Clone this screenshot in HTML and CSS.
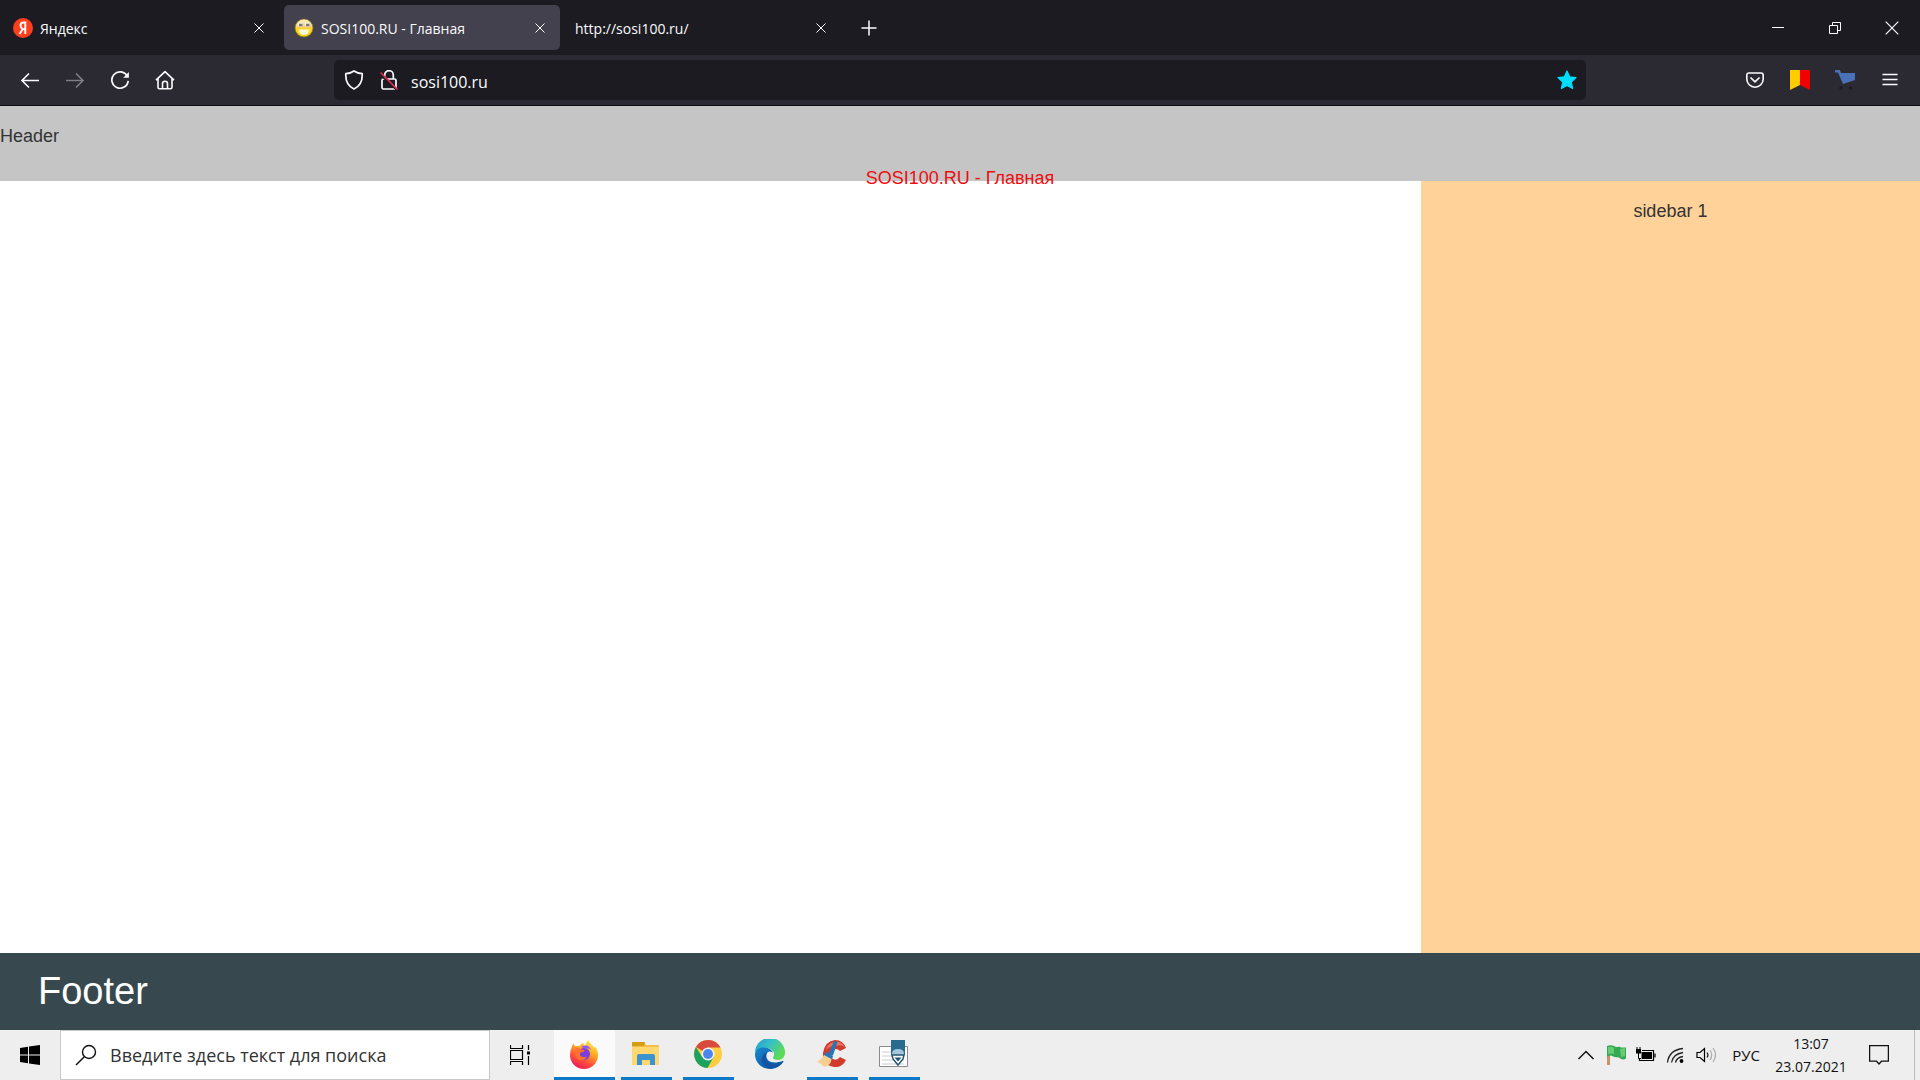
FILE: index.html
```html
<!DOCTYPE html>
<html lang="ru">
<head>
<meta charset="utf-8">
<title>SOSI100.RU - Главная</title>
<link rel="stylesheet" href="styles.css">
</head>
<body>
<div class="desktop">
  <div class="browser">
    <div class="tabbar">
      <div class="tabs">
        <div class="tab">
          <svg class="icon20" viewBox="0 0 20 20"><circle cx="10" cy="10" r="10" fill="#fc3f1d" stroke="none"/><path d="M12.300 16V4.500h-1.600C8.600 4.500 7.500 5.700 7.500 7.500c0 1.600.8 2.500 2.200 3.500L6.600 16M12.300 11.300h-2.300" fill="none" stroke="#fff" stroke-width="1.900"/></svg>
          <span class="tab-title">Яндекс</span>
          <button class="tab-close" aria-label="Закрыть вкладку"><svg class="icon10" viewBox="0 0 10 10"><path d="M.5.5l9 9M9.500.5l-9 9"/></svg></button>
        </div>
        <div class="tab tab-active">
          <svg class="icon20" viewBox="0 0 20 20"><defs><linearGradient id="smile" x1="0" y1="0" x2="0" y2="1"><stop offset="0" stop-color="#fff3d0"/><stop offset=".45" stop-color="#f5cf6a"/><stop offset=".6" stop-color="#ffd900"/><stop offset="1" stop-color="#f2d000"/></linearGradient></defs><circle cx="10" cy="10" r="9" fill="url(#smile)" stroke="#8d7524" stroke-width=".8"/><path d="M4 6.500h5M11 6.500h5" stroke="#f3efe6" stroke-width="3.500"/><path d="M5 7h3.500M12 7h3.500" stroke="#7d7b78" stroke-width="2.500"/><path d="M4.500 11.500h11q-1 5.500-5.500 5.500t-5.500-5.500z" fill="#fffbe0" stroke="none"/></svg>
          <span class="tab-title">SOSI100.RU - Главная</span>
          <button class="tab-close" aria-label="Закрыть вкладку"><svg class="icon10" viewBox="0 0 10 10"><path d="M.5.5l9 9M9.500.5l-9 9"/></svg></button>
        </div>
        <div class="tab">
          <span class="tab-title">http://sosi100.ru/</span>
          <button class="tab-close" aria-label="Закрыть вкладку"><svg class="icon10" viewBox="0 0 10 10"><path d="M.5.5l9 9M9.500.5l-9 9"/></svg></button>
        </div>
        <button class="tab-new" aria-label="Новая вкладка"><svg class="icon16" viewBox="0 0 16 16"><path d="M8 .5v15M.5 8h15" stroke-width="1.500"/></svg></button>
      </div>
      <div class="window-controls">
        <button class="window-button" aria-label="Свернуть"><svg class="icon14" viewBox="0 0 14 14"><path d="M1 6.500h12"/></svg></button>
        <button class="window-button" aria-label="Восстановить"><svg class="icon14" viewBox="0 0 14 14"><path d="M1.500 4.500h8v8h-8zM4.500 4V1.500h8v8H10"/></svg></button>
        <button class="window-button" aria-label="Закрыть"><svg class="icon14" viewBox="0 0 14 14"><path d="M.7.700l12.600 12.600M13.300.7L.7 13.300" stroke-width="1.200"/></svg></button>
      </div>
    </div>

    <div class="toolbar">
      <div class="nav-buttons">
        <button class="tool-button" aria-label="Назад"><svg class="icon20" viewBox="0 0 20 20"><path d="M19 10.500H2M9 3.500l-7 7 7 7" stroke-width="1.600"/></svg></button>
        <button class="tool-button" aria-label="Вперёд" disabled><svg class="icon20" viewBox="0 0 20 20"><path d="M1 10.500h17M11 3.500l7 7-7 7" stroke-width="1.600"/></svg></button>
        <button class="tool-button" aria-label="Обновить"><svg class="icon20" viewBox="0 0 20 20"><path d="M17.200 6A8.200 8.200 0 1 0 18.200 10.800" stroke-width="1.700"/><path d="M18.900 2v5.700h-5.700z" fill="#fbfbfe" stroke="none"/></svg></button>
        <button class="tool-button" aria-label="Домой"><svg class="icon20" viewBox="0 0 20 20"><path d="M1 10.200L10 1.600l9 8.600M3 8.700v8.600q0 1.500 1.500 1.500h11q1.500 0 1.500-1.500V8.700M7.500 18.600v-4.800a2.500 2.500 0 0 1 5 0v4.800" stroke-width="1.600" stroke-linejoin="round"/></svg></button>
      </div>
      <div class="address">
        <svg class="icon20" viewBox="0 0 20 20"><path d="M10 1Q6.500 3.500 1.800 3.700C1.400 10.600 3.300 15.800 10 19 16.700 15.800 18.600 10.600 18.200 3.700 13.500 3.500 10 1 10 1z" stroke-width="1.700" stroke-linejoin="round"/></svg>
        <svg class="icon20" viewBox="0 0 20 20"><path d="M5.700 8.500V5a4.300 4.300 0 0 1 8.600 0v3.500M4.500 9h11q1.500 0 1.500 1.500v7q0 1.500-1.500 1.500h-11Q3 19 3 17.500v-7Q3 9 4.500 9z" stroke-width="1.700"/><path d="M0 3.500L18.500 20.500" stroke="#1c1b22" stroke-width="2"/><path d="M1.500 2.500l17 17" stroke="#e22850" stroke-width="1.700"/></svg>
        <input class="address-input" type="text" value="sosi100.ru" aria-label="Адрес">
        <button class="star" aria-label="Закладка"><svg class="icon20" viewBox="0 0 20 20"><path d="M10 1l2.600 5.800 6.400.8-4.700 4.400 1.300 6.500L10 15.500l-5.600 3 1.300-6.500L1 7.600l6.400-.8z" fill="#00ddff" stroke="#00ddff" stroke-width="1.200" stroke-linejoin="round"/></svg></button>
      </div>
      <div class="extensions">
        <button class="tool-button" aria-label="Pocket"><svg class="icon20" viewBox="0 0 20 20"><path d="M4 3h12q2.200 0 2.200 2.200V9a8.200 8.200 0 0 1-16.400 0V5.200Q1.800 3 4 3z" stroke-width="1.600"/><path d="M5.500 7.500L10 11.800l4.500-4.300" stroke-width="1.700"/></svg></button>
        <button class="tool-button" aria-label="Закладки"><svg class="icon20" viewBox="0 0 20 20"><path d="M0 0h10v15L0 20z" fill="#fc0" stroke="none"/><path d="M10 0h10v20l-10-5z" fill="#f00000" stroke="none"/></svg></button>
        <button class="tool-button" aria-label="Покупки"><svg class="icon20" viewBox="0 0 20 20"><path d="M0 0h5l1 3h14v7L8 14 3 2.500H0z" fill="#4971b7" stroke="none"/><circle cx="6" cy="18" r="1.700" fill="#1c1b22" stroke="none"/><circle cx="15.500" cy="18" r="1.700" fill="#1c1b22" stroke="none"/></svg></button>
        <button class="tool-button" aria-label="Меню"><svg class="icon20" viewBox="0 0 20 20"><path d="M2.500 4.500h15M2.500 9.500h15M2.500 14.500h15" stroke-width="1.500"/></svg></button>
      </div>
    </div>

    <div class="site">
      <header class="site-header">
        <p class="header-label">Header</p>
        <p class="site-title">SOSI100.RU - Главная</p>
      </header>
      <div class="site-body">
        <main class="site-main"></main>
        <aside class="sidebar">sidebar 1</aside>
      </div>
      <footer class="site-footer">Footer</footer>
    </div>
  </div>

  <div class="taskbar">
    <button class="start" aria-label="Пуск"><svg class="icon20" viewBox="0 0 20 20"><path d="M0 3l8-1.200v7.700H0zM9 1.600L20 0v9.500H9zM0 10.500h8v7.700L0 17zM9 10.500h11V20L9 18.400z" fill="#000"/></svg></button>
    <label class="search">
      <svg class="icon22" viewBox="0 0 22 22"><circle cx="14" cy="8" r="6.500" fill="none" stroke="#111" stroke-width="1.400"/><path d="M9.300 12.700L1 21" stroke="#111" stroke-width="1.500"/></svg>
      <input class="search-input" type="text" placeholder="Введите здесь текст для поиска" aria-label="Поиск">
    </label>
    <button class="task-view" aria-label="Представление задач"><svg class="icon20" viewBox="0 0 20 20"><path d="M.5 0v3.500h12V0M.5 5.500h12v9H.5zM.5 20v-3.500h12V20M18.500 0v5M18.500 11v9" fill="none" stroke="#000" stroke-width="1.200"/><path d="M17 6.500h3v3h-3z"/></svg></button>
    <div class="apps">
      <button class="app app-wide" aria-label="Firefox"><svg class="icon30" viewBox="0 0 30 30"><defs><linearGradient id="fx" x1=".8" y1="0" x2=".3" y2="1"><stop offset="0" stop-color="#fff44f"/><stop offset=".4" stop-color="#ffa51f"/><stop offset=".7" stop-color="#ff4f3a"/><stop offset="1" stop-color="#e8175d"/></linearGradient></defs><path d="M2.500 9Q3 6 4.500 4.500q.5 2 2 3 2-1.200 4-.5Q12 4.500 14.500 4q0 2 1.500 3Q17 3 19.500 1q.5 3 4 5.500Q25 8 25.500 9l.5-1.500Q29 11 29 16A14 14 0 0 1 1 16Q1 12 2.500 9z" fill="url(#fx)"/><circle cx="15" cy="15" r="6" fill="#7a3fd8"/><path d="M6 10q3-2 6 .5l4 .5q-1 2-4 2.500-2 1-1 3 3 3 7 1-3 5-8 3.500Q5 18.500 6 10z" fill="#ff7130"/><path d="M12 8q7-4 10 3-2-2-4-1.500-3-.5-6-1.500z" fill="#9059ff"/></svg></button>
      <button class="app" aria-label="Проводник"><svg class="icon30" viewBox="0 0 30 30"><path d="M1 4q0-1 1-1h11l2 3h12q1 0 1 1v18q0 1-1 1H2q-1 0-1-1z" fill="#f2c04a"/><path d="M1 4q0-1 1-1h11q1 0 1 1l-1 3H1z" fill="#d69d12"/><path d="M1 8h27v17q0 1-1 1H2q-1 0-1-1z" fill="#ffd970"/><path d="M6 26V17q0-2 2-2h14q2 0 2 2v9h-5v-5h-8v5z" fill="#3b94cf"/></svg></button>
      <button class="app" aria-label="Chrome"><svg class="icon30" viewBox="0 0 30 30"><circle cx="15" cy="15" r="14" fill="#ffcd40"/><path d="M15 15L2.900 8A14 14 0 0 1 27.500 8.500H15z" fill="#d84a3d"/><path d="M2.900 8A14 14 0 0 0 14.500 29L20.600 18.200 15 15 9.400 18.200z" fill="#1ba160"/><circle cx="15" cy="15" r="6.500" fill="#f5f5f5"/><circle cx="15" cy="15" r="5" fill="#4a86ee"/></svg></button>
      <button class="app app-idle" aria-label="Edge"><svg class="icon30" viewBox="0 0 30 30"><defs><linearGradient id="edge-top" x1="0" y1="0" x2="1" y2=".5"><stop offset="0" stop-color="#249cc9"/><stop offset=".5" stop-color="#35bfc8"/><stop offset="1" stop-color="#5fdc55"/></linearGradient><linearGradient id="edge-low" x1="0" y1="0" x2="1" y2="1"><stop offset="0" stop-color="#1687d1"/><stop offset="1" stop-color="#0c4d94"/></linearGradient></defs><path d="M0 14A15 15 0 0 1 30 13.500c0 5-3.500 7.500-7 7.500-4 0-6-1.500-4.500-3.500C21 12 15 9 10 9 5 9 1 11 0 14z" fill="url(#edge-top)"/><path d="M0 15C.5 10 5 8 9 8.500q7 .5 9 5-5-3-6.500 2c-1 7 6 10 16 6.500q1-.5 1 .5C25 28 20 30 15 30 6 30 0 23 0 15z" fill="url(#edge-low)"/><path d="M12 13c-4 8 3 14 12 13-5 4-12 4-16-1-3-4-1-10 4-12z" fill="#1554a5"/></svg></button>
      <button class="app" aria-label="CCleaner"><svg class="icon30" viewBox="0 0 30 30"><path d="M29 9L23 12q-4-4-8 0-3 5 1 8 4 2 7-2l6 3q-4 8-12 7Q5 26 6 14 8 2 18 1q8 0 11 8z" fill="#d23b2b"/><path d="M28 8q-4-6-11-5-6 1-8 8 5-5 10-4 4-2 9 1z" fill="#ec7561"/><path d="M17.500 3l2 .5-4 12-3-1z" fill="#2476ba" stroke="#2476ba" stroke-width="1.500"/><path d="M9 13l7 4-1.500 4-8-4z" fill="#2476ba"/><path d="M7 16l7.500 4Q14 26 8 28q-1-2-3-1 0-3-3-3-1-2-2-1.500Q5 20 7 16z" fill="#f4cf90"/></svg></button>
      <button class="app" aria-label="Редактор"><svg class="icon30" viewBox="0 0 30 30"><path d="M.5 7.500h28v20H.5z" fill="#fff" stroke="#8b8b8b"/><path d="M3 13h22M3 17h22M3 21h22M3 25h22" stroke="#ccc"/><path d="M12 1h14v15H12z" fill="#296b8d"/><path d="M13 15q0-5 6-5t6 5v3H13z" fill="#a5c7dc"/><path d="M13 16h12l-1 4-5 6-5-6z" fill="#fff" stroke="#235570" stroke-width="1.500"/><path d="M15.500 18.500h7L19 22.500z" fill="#235570"/></svg></button>
    </div>
    <div class="tray">
      <button class="tray-button" aria-label="Скрытые значки"><svg class="icon20" viewBox="0 0 20 20"><path d="M2.500 14L10 6.500l7.500 7.500" fill="none" stroke="#111" stroke-width="1.500"/></svg></button>
      <button class="tray-button" aria-label="Флаг"><svg class="icon20" viewBox="0 0 20 20"><path d="M1 1h3v19H1z" fill="#c99267"/><path d="M1 1q4-1.500 8 .500 2 1 4 0l2 1h5v11q-2 1.500-5 .500l-2-1.500q-5 0-8-2-2 0-4 1z" fill="#35a852"/><path d="M2 2q4-1 6 1v6q-3-1-6 0zM14 4l5-1v8l-4 1z" fill="#65cc74"/></svg></button>
      <button class="tray-button" aria-label="Батарея"><svg class="icon20" viewBox="0 0 20 20"><path d="M6 5.500h11.500v10h-14V13M19 8.500v4" fill="none" stroke="#000" stroke-width="1.200"/><path d="M5.500 7h10.500v7H5.500zM0 4h5v4.500H0z"/><path d="M1 2v3M4 2v3M2.500 8v5.500H5" fill="none" stroke="#000"/></svg></button>
      <button class="tray-button" aria-label="Сеть"><svg class="icon20" viewBox="0 0 20 20"><path d="M1.500 17.500Q3 5 17 3.500M5.500 17.500Q7 9 17 7.500M9.500 17.500q1-5 7.500-6" fill="none" stroke="#222" stroke-width="1.300"/><circle cx="15.500" cy="16" r="1.900"/></svg></button>
      <button class="tray-button" aria-label="Звук"><svg class="icon20" viewBox="0 0 20 20"><path d="M1 7.500h3L8.500 3.500v13L4 12.500H1z" fill="none" stroke="#000" stroke-width="1.200"/><path d="M11 7.500q2 2.500 0 5" fill="none" stroke="#222" stroke-width="1.200"/><path d="M14 5q3.500 5 0 10M17 3q5 7 0 14" fill="none" stroke="#aaa" stroke-width="1.200"/></svg></button>
      <button class="language">РУС</button>
      <button class="clock"><span>13:07</span><span>23.07.2021</span></button>
      <button class="notifications" aria-label="Уведомления"><svg class="icon20" viewBox="0 0 20 20"><path d="M.6.700h18.800v15.500H12.500L10 19l-2.500-2.800H.6z" fill="none" stroke="#111" stroke-width="1.300"/></svg></button>
      <button class="show-desktop" aria-label="Показать рабочий стол"></button>
    </div>
  </div>
</div>
</body>
</html>
```
FILE: styles.css
```css
* {
  box-sizing: border-box;
}

body {
  margin: 0;
  font-family: "Open Sans", "Noto Sans", sans-serif;
}

button {
  display: flex;
  align-items: center;
  justify-content: center;
  margin: 0;
  padding: 0;
  border: 0;
  background: none;
  color: inherit;
  font: inherit;
}

input {
  min-width: 0;
  padding: 0;
  border: 0;
  outline: 0;
  background: none;
  font: inherit;
}

svg {
  display: block;
  flex: none;
}

.icon10 { width: 10px; height: 10px; }
.icon14 { width: 14px; height: 14px; }
.icon16 { width: 16px; height: 16px; }
.icon20 { width: 20px; height: 20px; }
.icon22 { width: 22px; height: 22px; }
.icon30 { width: 30px; height: 30px; }

.desktop,
.browser,
.site {
  display: flex;
  flex-direction: column;
}

.desktop {
  min-height: 100vh;
}

.browser,
.site {
  flex: 1;
}

/* Tab strip */
.tabbar {
  display: flex;
  justify-content: space-between;
  height: 55px;
  padding-left: 3px;
  background: #1c1b22;
  color: #fbfbfe;
}

.tabbar svg,
.toolbar svg {
  fill: none;
  stroke: #fbfbfe;
}

.tabs {
  display: flex;
  align-items: center;
  gap: 5px;
}

.tab {
  display: flex;
  align-items: center;
  gap: 7px;
  width: 276px;
  height: 45px;
  padding: 0 10px;
  border-radius: 5px;
  font-size: 14px;
}

.tab-active {
  background: #42414d;
}

.tab-title {
  flex: 1;
  padding-top: 2px;
  white-space: nowrap;
}

.tab-close {
  width: 20px;
  height: 20px;
}

.tab-new {
  width: 45px;
  height: 45px;
}

.window-controls {
  display: flex;
}

.window-button {
  width: 57px;
}

/* Navigation toolbar */
.toolbar {
  display: flex;
  align-items: center;
  height: 51px;
  padding: 0 8px 0 7px;
  border-bottom: 1px solid #0c0c0d;
  background: #2b2a33;
}

.nav-buttons,
.extensions {
  display: flex;
}

.tool-button {
  width: 45px;
  height: 40px;
}

.tool-button:disabled {
  opacity: 0.4;
}

.address {
  display: flex;
  flex: 1;
  align-items: center;
  gap: 15px;
  height: 40px;
  margin: 0 146px 0 147px;
  padding: 0 9px 0 10px;
  border-radius: 5px;
  background: #1c1b22;
}

.address-input {
  flex: 1;
  margin-left: -3px;
  padding-top: 3px;
  color: #fbfbfe;
  font-size: 16px;
}

/* Web page */
.site {
  background: #fff;
  color: #333;
  font-family: "Liberation Sans", Arial, sans-serif;
  font-size: 18px;
  line-height: 24px;
}

.site-header {
  height: 75px;
  padding-top: 18px;
  background: #c5c5c5;
}

.header-label,
.site-title {
  margin: 0;
}

.site-title {
  padding-top: 18px;
  color: #ee0d10;
  text-align: center;
}

.site-body {
  display: flex;
  flex: 1;
}

.site-main {
  flex: 1;
}

.sidebar {
  width: 26%;
  padding-top: 18px;
  background: #ffd29a;
  text-align: center;
}

.site-footer {
  padding: 16px 38px 17px;
  background: #37494f;
  color: #fff;
  font-size: 38px;
  line-height: 44px;
}

/* Taskbar */
.taskbar {
  display: flex;
  height: 50px;
  background: #eee;
  color: #111;
}

.start {
  width: 60px;
}

.search {
  display: flex;
  align-items: center;
  gap: 13px;
  width: 430px;
  padding-left: 14px;
  border: 1px solid #c8c8c8;
  background: #fff;
}

.search-input {
  flex: 1;
  font-size: 18px;
}

.search-input::placeholder {
  color: #333;
  opacity: 1;
}

.task-view {
  width: 64px;
  padding-right: 4px;
}

.apps {
  display: flex;
  gap: 11px;
}

.app {
  width: 51px;
  padding-right: 2px;
  border-bottom: 3px solid #0b78c8;
}

.app-wide {
  width: 61px;
  margin-right: -5px;
  background: #fafafa;
}

.app-idle {
  border-color: transparent;
}

.tray {
  display: flex;
  margin-left: auto;
}

.tray-button {
  width: 30px;
}

.language {
  width: 50px;
  font-size: 15px;
}

.clock {
  flex-direction: column;
  width: 80px;
  font-size: 14px;
  line-height: 23px;
}

.notifications {
  width: 63px;
  padding-right: 7px;
}

.show-desktop {
  width: 6px;
  border-left: 1px solid #bbb;
}
```
